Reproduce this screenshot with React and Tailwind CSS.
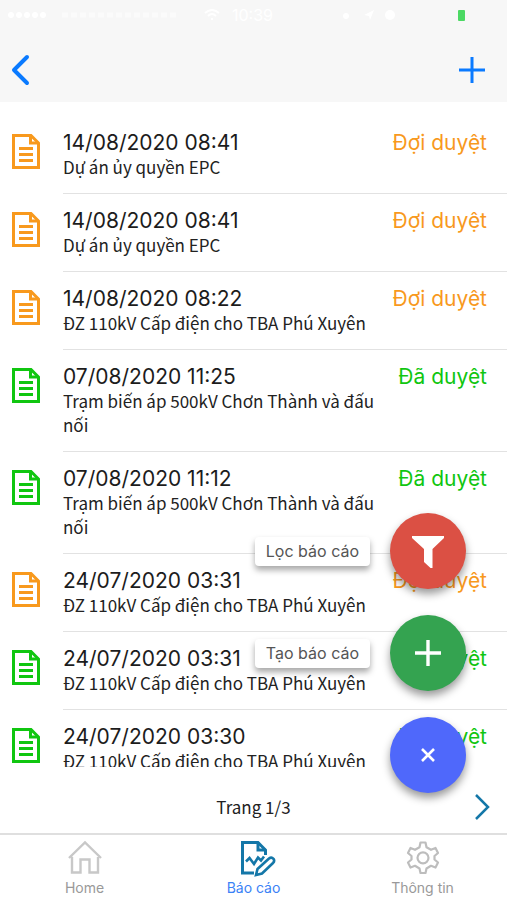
import React from "react";

const sans = "font-[Inter,'Liberation_Sans',sans-serif]";
const body = "font-['Noto_Sans_CJK_JP','Noto_Sans',sans-serif]";

const reports = [
  { time: "14/08/2020 08:41", name: "Dự án ủy quyền EPC", approved: false },
  { time: "14/08/2020 08:41", name: "Dự án ủy quyền EPC", approved: false },
  { time: "14/08/2020 08:22", name: "ĐZ 110kV Cấp điện cho TBA Phú Xuyên", approved: false },
  { time: "07/08/2020 11:25", name: "Trạm biến áp 500kV Chơn Thành và đấu nối", approved: true },
  { time: "07/08/2020 11:12", name: "Trạm biến áp 500kV Chơn Thành và đấu nối", approved: true },
  { time: "24/07/2020 03:31", name: "ĐZ 110kV Cấp điện cho TBA Phú Xuyên", approved: false },
  { time: "24/07/2020 03:31", name: "ĐZ 110kV Cấp điện cho TBA Phú Xuyên", approved: true },
  { time: "24/07/2020 03:30", name: "ĐZ 110kV Cấp điện cho TBA Phú Xuyên", approved: true },
];

function DocIcon() {
  return (
    <svg width="28" height="35" viewBox="0 0 28 35" fill="none" stroke="currentColor" aria-hidden="true">
      <path d="M1.5 1.5H19L26.5 9V33.500H1.500Z" strokeWidth="3" />
      <path d="M18.500 1.500V9H26.500" strokeWidth="3" />
      <path d="M7 14.500H21M7 20.500H21M7 26.500H21" strokeWidth="3" />
    </svg>
  );
}

function StatusBar() {
  return (
    <div className={`flex h-[30px] items-center px-2 text-sm text-white ${sans}`}>
      <div className="flex gap-[2px]">
        {[0, 1, 2, 3, 4].map((i) => (
          <span key={i} className="h-[6px] w-[6px] rounded-full bg-white" />
        ))}
      </div>
      <svg className="ml-4 opacity-60" width="114" height="12" viewBox="0 0 114 12" fill="none" stroke="currentColor" strokeWidth="5" strokeDasharray="6 3" aria-hidden="true">
        <path d="M0 6H114" />
      </svg>
      <svg className="ml-7" width="16" height="12" viewBox="0 0 16 12" fill="none" stroke="currentColor" strokeWidth="2" aria-hidden="true">
        <path d="M1 4Q8-2 15 4M4 7Q8 3 12 7M7 10H9" />
      </svg>
      <span className="ml-3 text-base">10:39</span>
      <svg className="ml-auto" width="58" height="12" viewBox="0 0 58 12" fill="currentColor" aria-hidden="true">
        <circle cx="6" cy="7" r="3" />
        <path d="M24 6L34 1L30 11L29 7Z" />
        <circle cx="50" cy="6" r="5" />
      </svg>
      <span className="ml-[60px] mr-[34px] h-[11px] w-[7px] rounded-[1px] bg-[#4cd964]" />
    </div>
  );
}

function Row({ report }) {
  const tone = report.approved ? "text-[#10c610]" : "text-[#f8991d]";
  return (
    <li className="flex shrink-0">
      <div className={`w-[63px] shrink-0 pl-3 pt-[18px] ${tone}`}>
        <DocIcon />
      </div>
      <div className="flex min-w-0 flex-1 items-start gap-4 border-b border-[#e2e2e2] pr-5 pb-[14px] pt-[15px]">
        <div className="min-w-0 flex-1">
          <p className={`text-[21px] leading-6 text-[#1c1c1c] ${sans}`}>{report.time}</p>
          <p className={`text-[17px] leading-6 text-[#222] ${body}`}>{report.name}</p>
        </div>
        <span className={`text-[21px] leading-6 ${sans} ${tone}`}>
          {report.approved ? "Đã duyệt" : "Đợi duyệt"}
        </span>
      </div>
    </li>
  );
}

function Fab({ label, text, color, children }) {
  return (
    <div className="flex items-center gap-5">
      {text && (
        <span className="rounded-sm bg-white px-[11px] py-1 text-base leading-[21px] text-[#555] shadow-[0_4px_6px_rgba(0,0,0,0.35)]">
          {text}
        </span>
      )}
      <button
        type="button"
        aria-label={label}
        className={`flex h-[76px] w-[76px] items-center justify-center rounded-full text-white shadow-[0_5px_8px_rgba(0,0,0,0.4)] ${color}`}
      >
        {children}
      </button>
    </div>
  );
}

function Tab({ label, color, children }) {
  return (
    <a href="#" className={`flex flex-1 flex-col items-center gap-px pt-1 ${color}`}>
      {children}
      <span className="text-sm leading-5">{label}</span>
    </a>
  );
}

export default function App() {
  return (
    <div className={`relative flex h-screen flex-col overflow-hidden bg-white ${sans}`}>
      <header className="h-[102px] shrink-0 bg-[#f7f7f7]">
        <StatusBar />
        <div className="flex h-20 items-center justify-between pl-[10px] pr-[21px]">
          <button type="button" aria-label="Quay lại" className="text-[#0a7aff]">
            <svg width="20" height="32" viewBox="0 0 20 32" fill="none" stroke="currentColor" strokeWidth="4" strokeLinecap="round" strokeLinejoin="round">
              <path d="M17 3L4 16L17 29" />
            </svg>
          </button>
          <button type="button" aria-label="Thêm" className="text-[#0a7aff]">
            <svg width="28" height="28" viewBox="0 0 28 28" fill="none" stroke="currentColor" strokeWidth="3">
              <path d="M14 1V27M1 14H27" />
            </svg>
          </button>
        </div>
      </header>

      <ul className="flex min-h-0 flex-1 flex-col overflow-hidden pt-[14px]">
        {reports.map((r, i) => (
          <Row key={i} report={r} />
        ))}
      </ul>

      <div className="grid h-[66px] shrink-0 grid-cols-3 items-center pt-[14px]">
        <span />
        <span className={`text-center text-[17px] leading-6 text-[#222] ${body}`}>Trang 1/3</span>
        <button type="button" aria-label="Trang sau" className="mr-[17px] justify-self-end text-[#1477a8]">
          <svg width="16" height="26" viewBox="0 0 16 26" fill="none" stroke="currentColor" strokeWidth="2.500">
            <path d="M2 1L14 13L2 25" />
          </svg>
        </button>
      </div>

      <nav className="flex h-[67px] shrink-0 border-t-2 border-[#dfdfdf]">
        <Tab label="Home" color="text-[#999]">
          <svg className="text-[#c8c8c8]" width="36" height="38" viewBox="0 0 36 38" fill="none" stroke="currentColor" strokeWidth="2.400">
            <path d="M2 19L18 3.500L34 19M4 19H6" />
            <path d="M5 18V33.500H13.500V20.500H22.500V33.500H31V18" />
          </svg>
        </Tab>
        <Tab label="Báo cáo" color="text-[#3b82f6]">
          <svg className="ml-2 text-[#1477a8]" width="36" height="38" viewBox="0 0 36 38" fill="none" stroke="currentColor" strokeWidth="3">
            <path d="M14 34H2.500V3.500H18L25.500 11V16" />
            <path d="M18 3.500V11H25.500" />
            <path d="M6 22.500L9.500 19L14 25L18 18.500L21 21.500L24 17.500" strokeWidth="2.600" />
            <path d="M16 36L17.500 30L29 19.500Q31.500 17.500 33.500 19.800Q35 22 33 24L22 34.500Z" strokeWidth="2.600" />
          </svg>
        </Tab>
        <Tab label="Thông tin" color="text-[#999]">
          <svg className="text-[#bdbdbd]" width="36" height="38" viewBox="0 0 36 38" fill="none" stroke="currentColor" strokeWidth="2.200" strokeLinejoin="round">
            <path d="M15.500 3.500H20.500L21.500 8.200L26 10.800L30.500 9L33 14L29.500 17V20.500L33 23.500L30.500 28.500L26 26.800L21.500 29.500L20.500 34H15.500L14.500 29.500L10 26.800L5.500 28.500L3 23.500L6.500 20.500V17L3 14L5.500 9L10 10.800L14.500 8.200Z" />
            <circle cx="18" cy="18.800" r="5.500" />
          </svg>
        </Tab>
      </nav>

      <div className="absolute bottom-[107px] right-[41px] flex flex-col items-end gap-[26px]">
        <Fab label="Lọc báo cáo" text="Lọc báo cáo" color="bg-[#db5044]">
          <svg width="32" height="34" viewBox="0 0 32 34" fill="currentColor">
            <path d="M0 2H32V4L20.500 15V34H18.500L12 28V15L0 4Z" />
          </svg>
        </Fab>
        <Fab label="Tạo báo cáo" text="Tạo báo cáo" color="bg-[#34a350]">
          <svg width="26" height="26" viewBox="0 0 26 26" fill="none" stroke="currentColor" strokeWidth="3.400">
            <path d="M13 0V26M0 13H26" />
          </svg>
        </Fab>
        <Fab label="Đóng" color="bg-[#4f68fb]">
          <svg width="14" height="14" viewBox="0 0 14 14" fill="none" stroke="currentColor" strokeWidth="2.600">
            <path d="M1 1L13 13M13 1L1 13" />
          </svg>
        </Fab>
      </div>
    </div>
  );
}
